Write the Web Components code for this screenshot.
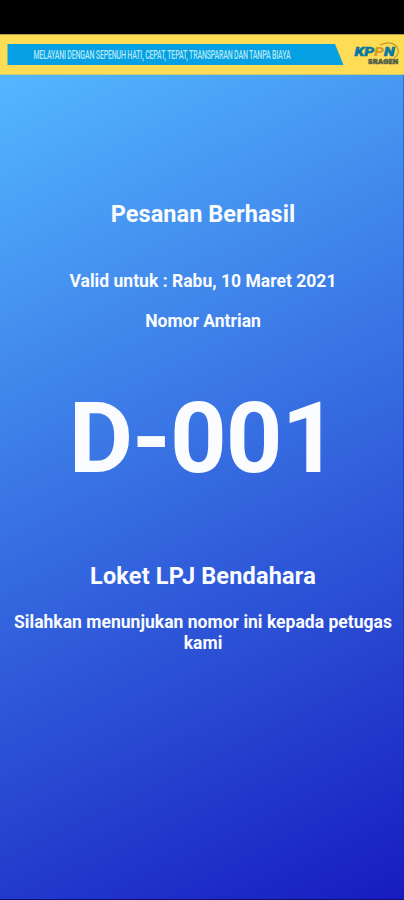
<!DOCTYPE html>
<html lang="id">
<head>
<meta charset="utf-8">
<title>Nomor Antrian</title>
<style>body{margin:0;background:#000}</style>
</head>
<body>
<queue-screen>
  <service-banner slot="banner"></service-banner>
  <ticket-text size="title" style="margin-top:124px">Pesanan Berhasil</ticket-text>
  <ticket-text size="body" style="margin-top:42px">Valid untuk : Rabu, 10 Maret 2021</ticket-text>
  <ticket-text size="body" style="margin-top:19px">Nomor Antrian</ticket-text>
  <ticket-text size="number" style="margin-top:47px">D-001</ticket-text>
  <ticket-text size="title" style="margin-top:64px;letter-spacing:.17px">Loket LPJ Bendahara</ticket-text>
  <ticket-text size="body" style="margin-top:21px">Silahkan menunjukan nomor ini kepada petugas kami</ticket-text>
</queue-screen>
<script>
class QueueScreen extends HTMLElement {
  constructor() {
    super();
    this.attachShadow({mode: 'open'}).innerHTML = `
      <style>
        :host{display:flex;flex-direction:column;width:404px;height:900px;box-sizing:border-box;padding-top:34px;background:#000;overflow:hidden;font-family:Roboto,"Liberation Sans",sans-serif;color:#fafcff}
        main{flex:1;display:flex;flex-direction:column;align-items:stretch;box-sizing:border-box;padding:0 6px 0 8px;background:linear-gradient(153.9deg,#53b7ff,#171cc0);border-bottom:1px solid #0b1272;box-shadow:inset -1px 0 rgba(10,25,140,.35)}
      </style>
      <slot name="banner"></slot>
      <main><slot></slot></main>`;
  }
}
class TicketText extends HTMLElement {
  constructor() {
    super();
    this.attachShadow({mode: 'open'}).innerHTML = `
      <style>
        :host{display:block;text-align:center;font-weight:700}
        :host([size=title]){font-size:23.500px;line-height:30px;letter-spacing:.050px}
        :host([size=body]){font-size:17.500px;line-height:21px;letter-spacing:.020px}
        :host([size=number]){font-size:99px;line-height:118px;letter-spacing:-1px}
      </style><slot></slot>`;
  }
}
class ServiceBanner extends HTMLElement {
  constructor() {
    super();
    this.attachShadow({mode: 'open'}).innerHTML = `
      <style>
        :host{display:block;height:41px;flex:none;background:#ffdc55;box-shadow:inset 0 1px #b79b3b,inset 0 -1px #c7cc76}
        svg{display:block}
      </style>
      <svg width="404" height="41" viewBox="0 0 404 41" font-family="Roboto, sans-serif">
        <path d="M7.500 10H335L343.500 31H7.500Z" fill="#04a0e3"/>
        <text transform="translate(33.500 25) scale(.54 1)" textLength="476" font-size="13" font-weight="500" fill="#b5e7f6">MELAYANI DENGAN SEPENUH HATI, CEPAT, TEPAT, TRANSPARAN DAN TANPA BIAYA</text>
        <path d="M380 11Q391 6 397 13Q401 20 394 24" fill="none" stroke="#c39a28" stroke-width="1.200"/>
        <text transform="translate(354.500 21.500) scale(1.250 1)" font-weight="900" font-style="italic" font-size="12.500" fill="#087eae" stroke="#086f98" stroke-width=".5">KP<tspan fill="#d49b27" stroke="none">P</tspan>N</text>
        <text x="368" y="29.500" font-weight="900" font-size="7.300" fill="#536047" stroke="#536047" stroke-width=".6" textLength="30">SRAGEN</text>
      </svg>`;
  }
}
customElements.define('queue-screen', QueueScreen);
customElements.define('ticket-text', TicketText);
customElements.define('service-banner', ServiceBanner);
</script>
</body>
</html>
